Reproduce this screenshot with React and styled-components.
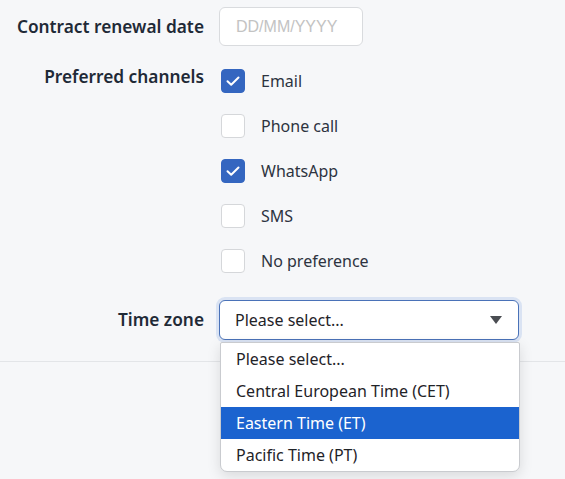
import React from "react";
import styled, { createGlobalStyle } from "styled-components";

const Global = createGlobalStyle`
  html, body { margin: 0; padding: 0; background: #f6f7f9; }
  body { font-family: "Noto Sans", "Open Sans", sans-serif; color: #1f2937; }
`;

const Page = styled.div`
  width: 565px;
  height: 479px;
  overflow: hidden;
  position: relative;
`;

const Form = styled.div`
  display: flex;
  flex-direction: column;
  padding-top: 7px;
  padding-bottom: 21px;
  border-bottom: 1px solid #e3e5e8;
`;

const Field = styled.div`
  display: grid;
  grid-template-columns: 204px 1fr;
  column-gap: 15px;
  align-items: ${(p) => (p.$top ? "start" : "center")};
  margin-top: ${(p) => p.$mt || 0}px;
`;

const Label = styled.div`
  text-align: right;
  font-size: 17.3px;
  font-weight: 600;
  color: #1f2a37;
  line-height: 22px;
  white-space: nowrap;
  padding-top: ${(p) => p.$pt || 0}px;
`;

const DateInput = styled.div`
  width: 144px;
  height: 39px;
  box-sizing: border-box;
  border: 1px solid #d9dbde;
  border-radius: 6px;
  background: #fff;
  display: flex;
  align-items: center;
  padding-left: 16px;
  font-family: "Liberation Sans", Arial, sans-serif;
  font-size: 16px;
  color: #c3c3c3;
`;

const Options = styled.div`
  display: flex;
  flex-direction: column;
`;

const Option = styled.label`
  height: 45px;
  display: flex;
  align-items: center;
  gap: 16px;
  padding-left: 2px;
  font-size: 16px;
  color: #2d3340;
`;

const Box = styled.span`
  width: 24px;
  height: 24px;
  box-sizing: border-box;
  border-radius: 4px;
  border: 1px solid ${(p) => (p.$on ? "#3466c0" : "#d5d7da")};
  background: ${(p) => (p.$on ? "#3466c0" : "#fff")};
  display: flex;
  align-items: center;
  justify-content: center;
`;

const SelectWrap = styled.div`
  position: relative;
  width: 300px;
`;

const Select = styled.div`
  height: 40px;
  box-sizing: border-box;
  border: 1px solid #4a72b8;
  border-radius: 6px;
  background: #fff;
  box-shadow: 0 0 0 3px rgba(120, 160, 225, 0.22);
  display: flex;
  align-items: center;
  justify-content: space-between;
  padding: 0 16px 0 15px;
  font-size: 16px;
  color: #1f2328;
`;

const Menu = styled.div`
  position: absolute;
  top: 42px;
  left: 1px;
  width: 298px;
  background: #fff;
  border: 1px solid #c9cbcf;
  border-radius: 2px 2px 7px 7px;
  box-shadow: 0 4px 14px rgba(0, 0, 0, 0.12);
  overflow: hidden;
  z-index: 2;
`;

const Item = styled.div`
  height: 32px;
  display: flex;
  align-items: center;
  padding-left: 15px;
  font-size: 16px;
  color: ${(p) => (p.$active ? "#fff" : "#1f2328")};
  background: ${(p) => (p.$active ? "#1b63cf" : "transparent")};
`;

const Check = () => (
  <svg width="16" height="16" viewBox="0 0 16 16">
    <path d="M2.5 8.3 L6.2 11.8 L13.5 4.5" fill="none" stroke="#fff" strokeWidth="2" strokeLinecap="round" strokeLinejoin="round" />
  </svg>
);

const Arrow = () => (
  <svg width="12" height="8" viewBox="0 0 12 8">
    <path d="M0 0 H12 L6 8 Z" fill="#4a4d52" />
  </svg>
);

const channels = [
  ["Email", true],
  ["Phone call", false],
  ["WhatsApp", true],
  ["SMS", false],
  ["No preference", false],
];

const zones = ["Please select...", "Central European Time (CET)", "Eastern Time (ET)", "Pacific Time (PT)"];

export default function App() {
  return (
    <Page>
      <Global />
      <Form>
        <Field>
          <Label>Contract renewal date</Label>
          <DateInput>DD/MM/YYYY</DateInput>
        </Field>
        <Field $top $mt={12}>
          <Label $pt={8}>Preferred channels</Label>
          <Options>
            {channels.map(([name, on]) => (
              <Option key={name}>
                <Box $on={on}>{on && <Check />}</Box>
                {name}
              </Option>
            ))}
          </Options>
        </Field>
        <Field $mt={17}>
          <Label>Time zone</Label>
          <SelectWrap>
            <Select>
              <span>Please select...</span>
              <Arrow />
            </Select>
            <Menu>
              {zones.map((z) => (
                <Item key={z} $active={z === "Eastern Time (ET)"}>{z}</Item>
              ))}
            </Menu>
          </SelectWrap>
        </Field>
      </Form>
    </Page>
  );
}
